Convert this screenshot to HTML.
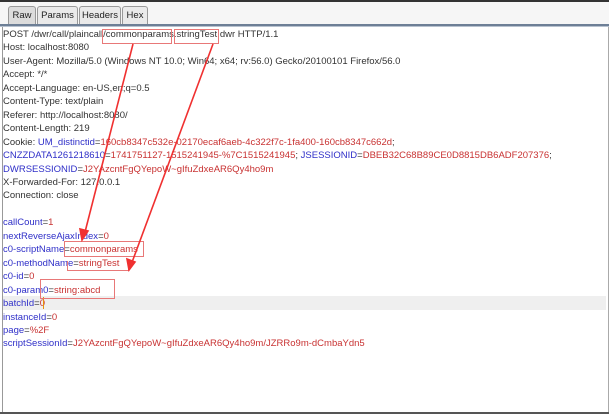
<!DOCTYPE html>
<html><head><style>
body{margin:0;width:609px;height:414px;overflow:hidden;background:#fff;font-family:"Liberation Sans",sans-serif;position:relative}
.top{position:absolute;left:0;top:0;width:609px;height:2px;background:#333}
.tabbar{position:absolute;left:0;top:2px;width:609px;height:22px;background:#f6f6f6}
.tab{position:absolute;top:6px;height:18px;border:1px solid #999;border-bottom:none;border-radius:3px 3px 0 0;background:#eaeaea;font-size:9.5px;color:#222;line-height:17px;text-align:center}
.tab.sel{background:#dcdcdc}
.line{position:absolute;left:0;top:24px;width:609px;height:2px;background:#6d7f96}
.line2{position:absolute;left:0;top:26px;width:609px;height:1px;background:#b8c2cf}
.ed{position:absolute;left:2px;top:27px;width:605px;height:386px;border-left:1px solid #999;border-right:1px solid #aaa}
.bot{position:absolute;left:0;top:412px;width:609px;height:2px;background:#555}
.hl{position:absolute;left:3px;top:296px;width:603px;height:14px;background:#efefef}
pre{position:absolute;left:3px;top:28px;margin:0;font-family:"Liberation Sans",sans-serif;font-size:9.5px;line-height:13.45px;color:#333}
.b{color:#2f2fc8}.r{color:#c83232}
.box{position:absolute;border:1px solid #e87878}
.caret{position:absolute;left:43px;top:297px;width:1px;height:12px;background:#e8900c}
</style></head><body>
<div class="top"></div><div class="tabbar"></div>
<div class="tab sel" style="left:8px;width:26px">Raw</div>
<div class="tab" style="left:37px;width:39px">Params</div>
<div class="tab" style="left:79px;width:40px">Headers</div>
<div class="tab" style="left:122px;width:24px">Hex</div>
<div class="line"></div><div class="line2"></div>
<div class="ed"></div>
<div class="hl"></div>
<pre>POST /dwr/call/plaincall/commonparams.stringTest.dwr HTTP/1.1
Host: localhost:8080
User-Agent: Mozilla/5.0 (Windows NT 10.0; Win64; x64; rv:56.0) Gecko/20100101 Firefox/56.0
Accept: */*
Accept-Language: en-US,en;q=0.5
Content-Type: text/plain
Referer: http://localhost:8080/
Content-Length: 219
Cookie: <span class="b">UM_distinctid</span>=<span class="r">160cb8347c532e-02170ecaf6aeb-4c322f7c-1fa400-160cb8347c662d</span>;
<span class="b">CNZZDATA1261218610</span>=<span class="r">1741751127-1515241945-%7C1515241945</span>; <span class="b">JSESSIONID</span>=<span class="r">DBEB32C68B89CE0D8815DB6ADF207376</span>;
<span class="b">DWRSESSIONID</span>=<span class="r">J2YAzcntFgQYepoW~gIfuZdxeAR6Qy4ho9m</span>
X-Forwarded-For: 127.0.0.1
Connection: close

<span class="b">callCount</span>=<span class="r">1</span>
<span class="b">nextReverseAjaxIndex</span>=<span class="r">0</span>
<span class="b">c0-scriptName</span>=<span class="r">commonparams</span>
<span class="b">c0-methodName</span>=<span class="r">stringTest</span>
<span class="b">c0-id</span>=<span class="r">0</span>
<span class="b">c0-param0</span>=<span class="r">string:abcd</span>
<span class="b">batchId</span>=<span class="r">0</span>
<span class="b">instanceId</span>=<span class="r">0</span>
<span class="b">page</span>=<span class="r">%2F</span>
<span class="b">scriptSessionId</span>=<span class="r">J2YAzcntFgQYepoW~gIfuZdxeAR6Qy4ho9m/JZRRo9m-dCmbaYdn5</span></pre>
<div class="caret"></div>
<div class="box" style="left:102px;top:29px;width:68px;height:13px"></div>
<div class="box" style="left:174px;top:29px;width:43px;height:13px"></div>
<div class="box" style="left:64px;top:241px;width:78px;height:14px"></div>
<div class="box" style="left:67px;top:261px;width:60px;height:9px;border-top:none"></div>
<div class="box" style="left:40px;top:279px;width:73px;height:18px"></div>
<svg style="position:absolute;left:0;top:0" width="609" height="414">
<g stroke="#f03030" stroke-width="1.6" fill="#f03030">
<line x1="133" y1="44" x2="84" y2="236"/>
<polygon points="82,240 80,229 88,231"/>
<line x1="213" y1="44" x2="131" y2="265"/>
<polygon points="129,270 127,259 135,262"/>
</g></svg>
<div class="bot"></div>
</body></html>
